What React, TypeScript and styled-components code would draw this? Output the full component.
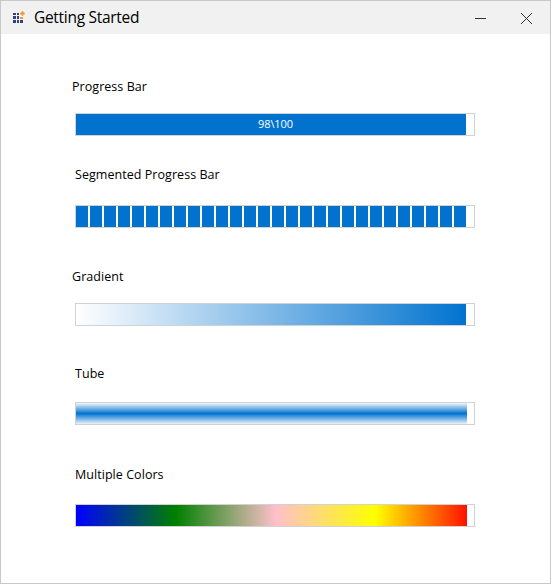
import React from "react";
import styled, { createGlobalStyle } from "styled-components";

const GlobalStyle = createGlobalStyle`
  * { box-sizing: border-box; }
  body { margin: 0; background: #fff; }
`;

const Window = styled.main`
  width: 551px;
  height: 584px;
  border: 1px solid #c8c8c8;
  background: #fff;
  color: #000;
  font-family: "Open Sans", "Noto Sans", sans-serif;
  overflow: hidden;
`;

const TitleBar = styled.header`
  display: flex;
  align-items: center;
  height: 33px;
  padding: 0 1px 0 12px;
  background: #f1f1f1;
`;

const AppIcon = styled.svg`
  display: block;
  width: 13px;
  height: 13px;
  margin-right: 8px;
`;

const Title = styled.h1`
  flex: 1;
  margin: 0;
  padding-bottom: 1px;
  font-size: 15.5px;
  line-height: 22px;
  font-weight: 400;
  letter-spacing: -0.3px;
`;

const WindowButton = styled.button`
  display: grid;
  place-items: center;
  width: 46px;
  height: 33px;
  padding: 0;
  border: 0;
  background: transparent;
`;

const Content = styled.div`
  padding-left: 74px;
`;

const Section = styled.section<{ $top: number }>`
  padding-top: ${(p) => p.$top}px;
`;

const Label = styled.div<{ $outdent?: boolean; $gap: number }>`
  height: 18px;
  margin-left: ${(p) => (p.$outdent ? -3 : 0)}px;
  margin-bottom: ${(p) => p.$gap}px;
  font-size: 12.5px;
  line-height: 18px;
  letter-spacing: 0.05px;
  white-space: nowrap;
`;

const Track = styled.div`
  display: flex;
  width: 400px;
  height: 23px;
  border: 1px solid #d2d2d2;
  background: #fff;
`;

const Fill = styled.div<{ $width: number; $background: string }>`
  width: ${(p) => p.$width}px;
  height: 21px;
  background: ${(p) => p.$background};
`;

const SolidFill = styled(Fill)`
  display: flex;
  padding-left: 9px;
  justify-content: center;
  color: #fff;
  font-size: 11px;
  line-height: 20px;
  letter-spacing: -0.1px;
`;

const Segments = styled.div`
  display: flex;
  gap: 2px;
`;

const Segment = styled.div`
  width: 12px;
  height: 21px;
  background: #0173cf;
`;

const tube =
  "linear-gradient(to bottom, #f0f7fc 0%, #0173cf 50%, #e9f3fb 100%)";
const rainbow =
  "linear-gradient(to right, #0000ff 0px, #008000 100px, #ffc0cb 200px, #ffff00 299px, #ff0000 398px)";

export default function App() {
  return (
    <>
      <GlobalStyle />
      <Window>
        <TitleBar>
          <AppIcon viewBox="0 0 13 13" aria-hidden="true">
            <g fill="#2f4480" shapeRendering="crispEdges">
              <path d="M0 2h3v2H0zM4 2h2v2H4zM0 5h3v3H0zM4 5h2v3H4zM0 9h3v3H0zM4 9h2v3H4zM7 9h3v3H7z" />
            </g>
            <path d="M7 6h3v2H7z" fill="#f39a32" />
            <path d="M9.5 0l1 1.5 1.5 1-1.5 1-1 1.5-1-1.5-1.5-1 1.5-1z" fill="#f39a32" stroke="#f39a32" strokeWidth=".6" />
          </AppIcon>
          <Title>Getting Started</Title>
          <WindowButton aria-label="Minimize">
            <svg width="11" height="11" viewBox="0 0 11 11" shapeRendering="crispEdges">
              <path d="M0 6h11v1H0z" fill="#303030" />
            </svg>
          </WindowButton>
          <WindowButton aria-label="Close">
            <svg width="11" height="13" viewBox="0 0 11 13" shapeRendering="crispEdges">
              <path d="M0 2l11 11M11 2L0 13" stroke="#303030" fill="none" />
            </svg>
          </WindowButton>
        </TitleBar>
        <Content>
          <Section $top={44}>
            <Label $outdent $gap={17}>Progress Bar</Label>
            <Track>
              <SolidFill $width={390} $background="#0173cf">{"98\\100"}</SolidFill>
            </Track>
          </Section>
          <Section $top={30}>
            <Label $gap={21}>Segmented Progress Bar</Label>
            <Track>
              <Segments>
                {Array.from({ length: 28 }, (_, i) => (
                  <Segment key={i} />
                ))}
              </Segments>
            </Track>
          </Section>
          <Section $top={40}>
            <Label $outdent $gap={17}>Gradient</Label>
            <Track>
              <Fill $width={390} $background="linear-gradient(to right, #fff, #0173cf)" />
            </Track>
          </Section>
          <Section $top={39}>
            <Label $gap={19}>Tube</Label>
            <Track>
              <Fill $width={391} $background={tube} />
            </Track>
          </Section>
          <Section $top={41}>
            <Label $gap={20}>Multiple Colors</Label>
            <Track>
              <Fill $width={391} $background={rainbow} />
            </Track>
          </Section>
        </Content>
      </Window>
    </>
  );
}
